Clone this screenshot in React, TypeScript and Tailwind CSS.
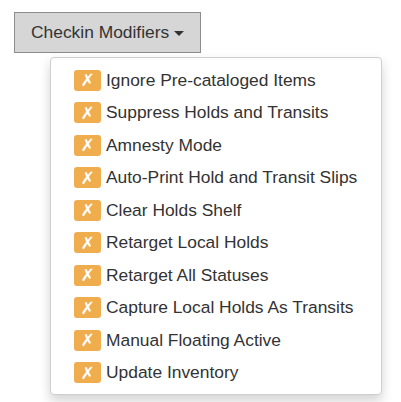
import React from "react";

const items = [
  "Ignore Pre-cataloged Items",
  "Suppress Holds and Transits",
  "Amnesty Mode",
  "Auto-Print Hold and Transit Slips",
  "Clear Holds Shelf",
  "Retarget Local Holds",
  "Retarget All Statuses",
  "Capture Local Holds As Transits",
  "Manual Floating Active",
  "Update Inventory",
];

export default function App() {
  return (
    <div
      className="w-[401px] h-[402px] bg-white text-[#333] relative"
      style={{ fontFamily: '"Liberation Sans", Arial, sans-serif' }}
    >
      <div className="pt-[12px] pl-[14px]">
        <button className="flex items-center h-[41px] px-[16px] bg-[#d6d6d6] border border-[#8c8c8c] text-[17.4px] text-[#333] leading-none">
          <span>Checkin Modifiers</span>
          <span className="ml-[5px] mt-[2px] w-0 h-0 border-t-[5px] border-t-[#333] border-x-[5px] border-x-transparent" />
        </button>
      </div>
      <div className="absolute left-[50px] top-[57px] w-[332px] h-[338px] bg-white border border-[#cfcfcf] rounded-[4px] shadow-[0_6px_12px_rgba(0,0,0,0.175)] pt-[6px] pl-[23px]">
        {items.map((t) => (
          <div key={t} className="flex items-center h-[32.5px]">
            <span
              className="flex items-center justify-center w-[27px] h-[21px] rounded-[3px] bg-[#f0ad4e] text-white text-[17px] font-bold leading-none pt-[1px]"
              style={{ fontFamily: '"DejaVu Sans", sans-serif' }}
            >
              ✗
            </span>
            <span className="ml-[5px] text-[17.4px] leading-none">{t}</span>
          </div>
        ))}
      </div>
    </div>
  );
}
